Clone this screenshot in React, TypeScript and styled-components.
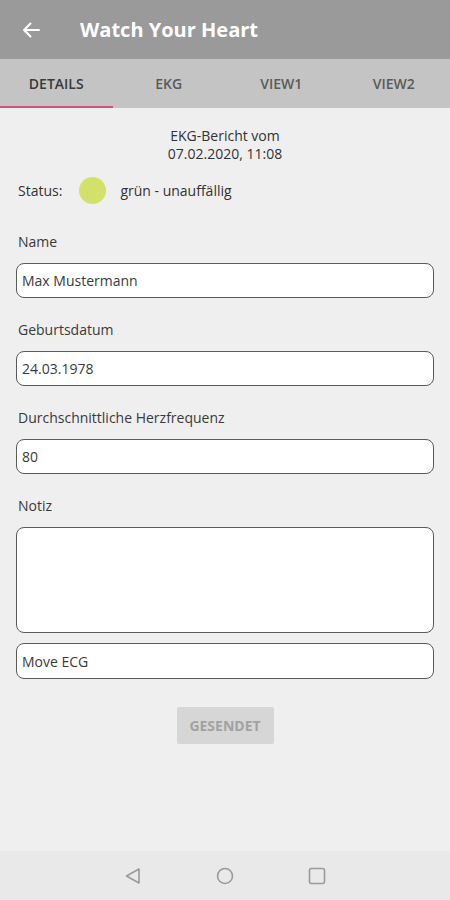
import styled, { createGlobalStyle } from "styled-components";

const GlobalStyle = createGlobalStyle`
  html, body {
    margin: 0;
    padding: 0;
    background: #efefef;
  }
  body {
    font-family: "Open Sans", "Noto Sans", sans-serif;
  }
  * {
    box-sizing: border-box;
  }
`;

const Screen = styled.div`
  width: 450px;
  height: 900px;
  display: flex;
  flex-direction: column;
  background: #efefef;
  overflow: hidden;
`;

const AppBar = styled.header`
  height: 59px;
  background: #9a9a9a;
  display: flex;
  align-items: center;
  padding-left: 21px;
  gap: 39px;
  flex-shrink: 0;
`;

const BackButton = styled.button`
  border: none;
  background: none;
  padding: 0;
  width: 20px;
  height: 20px;
  display: flex;
  align-items: center;
  justify-content: center;
  cursor: pointer;
`;

const Title = styled.h1`
  margin: 0;
  color: #ffffff;
  font-size: 20px;
  font-weight: 700;
`;

const Tabs = styled.nav`
  height: 49px;
  background: #c4c4c4;
  display: grid;
  grid-template-columns: repeat(4, 1fr);
  flex-shrink: 0;
`;

const Tab = styled.div<{ $active?: boolean }>`
  display: flex;
  align-items: center;
  justify-content: center;
  font-size: 14px;
  font-weight: 600;
  color: ${({ $active }) => ($active ? "#3a3a3a" : "#5a5a5a")};
  border-bottom: 2px solid ${({ $active }) => ($active ? "#d94f7c" : "transparent")};
  padding-top: 2px;
`;

const Content = styled.main`
  flex: 1;
  padding: 19px 16px 0 16px;
  display: flex;
  flex-direction: column;
`;

const ReportHeader = styled.div`
  text-align: center;
  font-size: 14px;
  line-height: 18px;
  color: #333;
`;

const StatusRow = styled.div`
  display: flex;
  align-items: center;
  margin-top: 14px;
  padding-left: 2px;
  font-size: 14px;
  color: #333;
`;

const StatusDot = styled.span<{ $color: string }>`
  width: 27px;
  height: 27px;
  border-radius: 50%;
  background: ${({ $color }) => $color};
  margin: 0 14px 0 17px;
`;

const Field = styled.div<{ $first?: boolean }>`
  display: flex;
  flex-direction: column;
  gap: 12px;
  margin-top: ${({ $first }) => ($first ? "29px" : "23px")};
`;

const Label = styled.label`
  font-size: 14px;
  line-height: 18px;
  color: #3a3a3a;
  padding-left: 2px;
`;

const Input = styled.input`
  height: 35px;
  width: 100%;
  border: 1.5px solid #5a5a5a;
  border-radius: 8px;
  background: #fff;
  padding: 0 5px;
  font-family: inherit;
  font-size: 14px;
  color: #3a3a3a;
  outline: none;
`;

const TextArea = styled.textarea`
  height: 106px;
  width: 100%;
  border: 1.5px solid #5a5a5a;
  border-radius: 8px;
  background: #fff;
  padding: 6px;
  font-family: inherit;
  font-size: 14px;
  resize: none;
  outline: none;
`;

const LooseInput = styled(Input)`
  margin-top: 10px;
  height: 36px;
`;

const SendButton = styled.button`
  align-self: center;
  margin-top: 28px;
  width: 97px;
  height: 37px;
  border: none;
  border-radius: 2px;
  background: #d6d6d6;
  color: #a2a2a2;
  font-family: inherit;
  font-size: 14px;
  font-weight: 700;
`;

const NavBar = styled.footer`
  height: 49px;
  background: #e9e9e9;
  display: flex;
  align-items: center;
  justify-content: center;
  flex-shrink: 0;
`;

const NavSlot = styled.div`
  width: 92px;
  display: flex;
  justify-content: center;
`;

const fields = [
  { label: "Name", value: "Max Mustermann" },
  { label: "Geburtsdatum", value: "24.03.1978" },
  { label: "Durchschnittliche Herzfrequenz", value: "80" },
];

const tabs = ["DETAILS", "EKG", "VIEW1", "VIEW2"];

const App = () => {
  return (
    <>
      <GlobalStyle />
      <Screen>
        <AppBar>
          <BackButton aria-label="Zurück">
            <svg width="20" height="20" viewBox="0 0 20 20">
              <path
                d="M18 10H3M9.5 3.5L3 10l6.5 6.5"
                fill="none"
                stroke="#fff"
                strokeWidth="2"
                strokeLinecap="round"
                strokeLinejoin="round"
              />
            </svg>
          </BackButton>
          <Title>Watch Your Heart</Title>
        </AppBar>
        <Tabs>
          {tabs.map((t, i) => (
            <Tab key={t} $active={i === 0}>
              {t}
            </Tab>
          ))}
        </Tabs>
        <Content>
          <ReportHeader>
            EKG-Bericht vom
            <br />
            07.02.2020, 11:08
          </ReportHeader>
          <StatusRow>
            Status:
            <StatusDot $color="#d3e06a" />
            grün - unauffällig
          </StatusRow>
          {fields.map((f, i) => (
            <Field key={f.label} $first={i === 0}>
              <Label>{f.label}</Label>
              <Input defaultValue={f.value} />
            </Field>
          ))}
          <Field>
            <Label>Notiz</Label>
            <TextArea />
          </Field>
          <LooseInput defaultValue="Move ECG" />
          <SendButton disabled>GESENDET</SendButton>
        </Content>
        <NavBar>
          <NavSlot>
            <svg width="20" height="20" viewBox="0 0 20 20">
              <path
                d="M16 3v14L3.5 10z"
                fill="none"
                stroke="#9a9a9a"
                strokeWidth="1.6"
                strokeLinejoin="round"
              />
            </svg>
          </NavSlot>
          <NavSlot>
            <svg width="20" height="20" viewBox="0 0 20 20">
              <circle cx="10" cy="10" r="7.5" fill="none" stroke="#9a9a9a" strokeWidth="1.6" />
            </svg>
          </NavSlot>
          <NavSlot>
            <svg width="20" height="20" viewBox="0 0 20 20">
              <rect x="2.5" y="2.5" width="15" height="15" rx="2" fill="none" stroke="#9a9a9a" strokeWidth="1.6" />
            </svg>
          </NavSlot>
        </NavBar>
      </Screen>
    </>
  );
};

export default App;
